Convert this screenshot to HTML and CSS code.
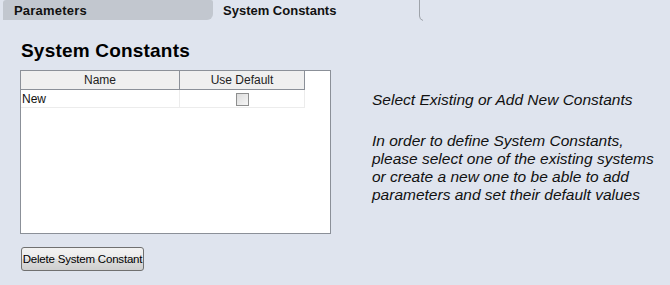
FILE: index.html
```html
<!DOCTYPE html>
<html lang="en">
<head>
  <meta charset="UTF-8" />
  <title>System Constants</title>
  <link rel="stylesheet" href="styles.css">
</head>
<body>
  <div class="tabs">
    <div class="tab">Parameters</div>
    <div class="tab active">
      System Constants
      <svg class="tab-edge" width="6" height="21" viewBox="0 0 6 21">
        <path d="M1.5 0 V16 Q1.5 19.5 5 20.5" fill="none" stroke="#9ea3aa" stroke-width="1" />
      </svg>
    </div>
  </div>

  <div class="content">
    <div class="left">
      <h2>System Constants</h2>
      <div class="grid-box">
        <table class="grid">
          <thead>
            <tr><th class="col-name">Name</th><th class="col-default">Use Default</th></tr>
          </thead>
          <tbody>
            <tr><td>New</td><td class="center"><span class="check"></span></td></tr>
          </tbody>
        </table>
      </div>
      <button class="btn">Delete System Constant</button>
    </div>

    <div class="help">
      <p>Select Existing or Add New Constants</p>
      <p>In order to define System Constants,<br>
        please select one of the existing systems<br>
        or create a new one to be able to add<br>
        parameters and set their default values</p>
    </div>
  </div>
</body>
</html>
```

FILE: styles.css
```css
body {
  margin: 0;
  background: #dfe4ee;
  font-family: "Liberation Sans", Arial, sans-serif;
  color: #000;
}
.tabs {
  display: flex;
  height: 20px;
  padding-left: 3px;
}
.tab {
  position: relative;
  width: 199px;
  padding-left: 11px;
  font-size: 13px;
  font-weight: bold;
  line-height: 21px;
  letter-spacing: 0.2px;
  color: #111;
  background: #c2c7cf;
  border-radius: 3px 2px 6px 0;
}
.tab.active {
  width: 197px;
  margin-left: 1px;
  padding-left: 9px;
  letter-spacing: 0;
  background: transparent;
}
.tab-edge {
  position: absolute;
  right: -4px;
  top: 0;
}
.content {
  display: flex;
  padding-left: 20px;
}
.left {
  width: 311px;
}
h2 {
  margin: 20px 0 8px 1px;
  font-size: 19px;
  line-height: 22px;
  letter-spacing: 0.2px;
  font-weight: bold;
}
.grid-box {
  height: 162px;
  background: #fff;
  border: 1px solid #8b9098;
}
.grid {
  border-collapse: collapse;
  width: 284px;
  font-size: 12px;
}
.grid th {
  height: 18px;
  padding: 0;
  font-weight: normal;
  background: #efefef;
  border-right: 1px solid #8b9098;
  border-bottom: 1px solid #8b9098;
  color: #222;
}
.col-name {
  width: 158px;
}
.grid td {
  height: 17px;
  padding: 0 0 0 1px;
  border-right: 1px solid #ececec;
  border-bottom: 1px solid #ececec;
  color: #111;
}
.grid td.center {
  text-align: center;
  padding: 0;
}
.check {
  display: inline-block;
  width: 11px;
  height: 11px;
  margin-top: 2px;
  vertical-align: top;
  border: 1px solid #8e8f8f;
  background: linear-gradient(135deg, #dcdcdc, #f6f6f6);
}
.btn {
  margin: 13px 0 0 1px;
  width: 123px;
  height: 24px;
  padding: 0;
  font-family: "Liberation Sans", Arial, sans-serif;
  font-size: 11.5px;
  letter-spacing: -0.2px;
  white-space: nowrap;
  color: #000;
  border: 1px solid #707070;
  border-radius: 3px;
  background: linear-gradient(#f2f2f2, #ebebeb 50%, #dddddd 50%, #cfcfcf);
}
.help {
  margin: 71px 0 0 41px;
  font-size: 15.5px;
  font-style: italic;
  line-height: 18px;
  color: #111;
}
.help p {
  margin: 0 0 23px;
}
```
